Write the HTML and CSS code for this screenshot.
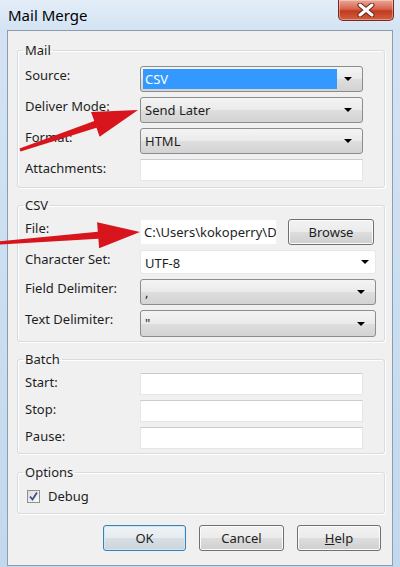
FILE: index.html
```html
<!DOCTYPE html>
<html>

<head>
    <meta name="viewport" content="width=device-width, initial-scale=1.0">
    <link rel="stylesheet" href="styles.css">
</head>

<body>
    <div class="window">
        <div class="titlebar">
            <span class="title">Mail Merge</span>
            <button class="close" aria-label="Close">
                <svg width="18" height="14" viewBox="0 0 18 14">
                    <path d="M3 2 L15 12 M15 2 L3 12" stroke="#6b2418" stroke-width="5" stroke-linecap="round" />
                    <path d="M3 2 L15 12 M15 2 L3 12" stroke="#fff" stroke-width="3" stroke-linecap="round" />
                </svg>
            </button>
        </div>

        <div class="client">
            <fieldset class="group">
                <legend>Mail</legend>
                <div class="rows rows-narrow">
                    <label>Source:</label>
                    <div class="combo">
                        <span class="val selected">CSV</span>
                        <span class="arrow"></span>
                    </div>
                    <label>Deliver Mode:</label>
                    <div class="combo">
                        <span class="val">Send Later</span>
                        <span class="arrow"></span>
                    </div>
                    <label>Format:</label>
                    <div class="combo">
                        <span class="val">HTML</span>
                        <span class="arrow"></span>
                    </div>
                    <label>Attachments:</label>
                    <div class="text"></div>
                </div>
            </fieldset>

            <fieldset class="group">
                <legend>CSV</legend>
                <div class="rows rows-wide">
                    <label>File:</label>
                    <div class="file-row">
                        <div class="text file">C:\Users\kokoperry\D</div>
                        <button class="btn browse">Browse</button>
                    </div>
                    <label>Character Set:</label>
                    <div class="combo plain">
                        <span class="val">UTF-8</span>
                        <span class="arrow"></span>
                    </div>
                    <label>Field Delimiter:</label>
                    <div class="combo">
                        <span class="val">,</span>
                        <span class="arrow"></span>
                    </div>
                    <label>Text Delimiter:</label>
                    <div class="combo tall">
                        <span class="val">"</span>
                        <span class="arrow"></span>
                    </div>
                </div>
            </fieldset>

            <fieldset class="group">
                <legend>Batch</legend>
                <div class="rows rows-narrow">
                    <label>Start:</label>
                    <div class="text"></div>
                    <label>Stop:</label>
                    <div class="text"></div>
                    <label>Pause:</label>
                    <div class="text"></div>
                </div>
            </fieldset>

            <fieldset class="group options">
                <legend>Options</legend>
                <div class="check-row">
                    <span class="check">
                        <svg width="11" height="11" viewBox="0 0 11 11">
                            <path d="M2 5.5 L4.5 8.5 L9 1.5" fill="none" stroke="#3b4f8a" stroke-width="1.8" />
                        </svg>
                    </span>
                    <span>Debug</span>
                </div>
            </fieldset>

            <div class="actions">
                <button class="btn default ok">OK</button>
                <button class="btn cancel">Cancel</button>
                <button class="btn help"><u>H</u>elp</button>
            </div>
        </div>

        <!-- red annotation arrows drawn over the dialog -->
        <svg class="arrows" width="400" height="567" viewBox="0 0 400 567">
            <polygon fill="#d8141d"
                points="19.5,148.6 94.3,121.1 91,112 138,110 99.6,136.7 96.5,127.7 20.5,151.4" />
            <polygon fill="#d8141d"
                points="-2,241.5 97.8,231.8 97.1,222.3 140,232 99.1,248.3 98.4,238.8 -2,244.5" />
        </svg>
    </div>
</body>

</html>
```

FILE: styles.css
```css
* {
    box-sizing: border-box;
}

body {
    margin: 0;
    font-family: "Noto Sans", "Open Sans", sans-serif;
    font-size: 13px;
    color: #1e1e1e;
}

.window {
    position: relative;
    width: 400px;
    height: 567px;
    overflow: hidden;
    background: linear-gradient(#e3edf8 0px, #d3e3f3 30px, #c3d8ee 100%);
}

.titlebar {
    height: 30px;
    display: flex;
    justify-content: space-between;
    align-items: flex-start;
    padding-left: 8px;
}

.title {
    font-size: 15px;
    line-height: 30px;
    color: #000;
}

.close {
    width: 56px;
    height: 21px;
    margin-right: 6px;
    padding: 0;
    border: 1px solid #7a2a1c;
    border-top: none;
    border-radius: 0 0 5px 5px;
    background: linear-gradient(#eaa898, #d7634c 45%, #c23a20 55%, #d0603f);
    box-shadow: inset 0 0 0 1px rgba(255, 255, 255, 0.35);
    display: flex;
    align-items: center;
    justify-content: center;
}

.client {
    margin: 0 7px;
    height: 536px;
    background: #f0f0f0;
    border: 1px solid #8f9cab;
    padding: 10px 7px 0 9px;
}

.group {
    margin: 0 0 8px;
    border: 1px solid #d5dce2;
    border-radius: 3px;
    padding: 5px 8px 4px 7px;
    box-shadow: inset 1px 1px 0 #fff, 1px 1px 0 #fff;
}

.group legend {
    padding: 0 2px;
    margin-left: -2px;
    line-height: 18px;
}

.group:first-child {
    padding-top: 7px;
    padding-bottom: 6px;
}

.options {
    margin-top: 9px;
    padding-top: 5px;
    padding-bottom: 7px;
}

.rows {
    display: grid;
    row-gap: 5px;
}

.rows-narrow {
    grid-template-columns: 115px 223px;
}

.rows-wide {
    grid-template-columns: 115px 1fr;
}

.rows label {
    align-self: start;
    line-height: 18px;
}

.combo {
    height: 26px;
    display: flex;
    align-items: center;
    padding: 2px;
    border: 1px solid #8c8c8c;
    border-radius: 3px;
    background: linear-gradient(#f4f4f4, #eaeaea 50%, #dedede 51%, #d3d3d3);
}

.combo.tall {
    height: 27px;
}

.combo.plain {
    height: 24px;
    border-color: #e4e7eb;
    background: #fff;
}

.combo .val {
    flex: 1;
    height: 100%;
    padding-left: 2px;
    line-height: 20px;
    white-space: nowrap;
}

.combo .selected {
    background: #3399ff;
    color: #fff;
}

.arrow {
    width: 0;
    height: 0;
    margin: 0 8px 0 7px;
    border-left: 4px solid transparent;
    border-right: 4px solid transparent;
    border-top: 4px solid #000;
}

.combo.plain .arrow {
    margin-right: 4px;
}

.text {
    height: 22px;
    background: #fff;
    border: 1px solid #e3e6ea;
    border-top-color: #c9ccd2;
}

.file-row {
    display: flex;
    gap: 11px;
}

.text.file {
    width: 137px;
    height: 26px;
    padding: 0 3px;
    line-height: 24px;
    overflow: hidden;
    white-space: nowrap;
    border-color: #eef0f2;
}

.btn {
    height: 26px;
    padding: 0;
    border: 1px solid #707070;
    border-radius: 3px;
    background: linear-gradient(#f2f2f2, #ebebeb 50%, #dddddd 51%, #cfcfcf);
    box-shadow: inset 0 0 0 1px #fbfbfb;
    font: inherit;
    color: #1e1e1e;
}

.browse {
    width: 86px;
}

.check-row {
    height: 20px;
    display: flex;
    align-items: center;
    gap: 8px;
    padding-left: 2px;
}

.check {
    width: 13px;
    height: 13px;
    display: flex;
    align-items: center;
    justify-content: center;
    border: 1px solid #8e8f8f;
    background: linear-gradient(135deg, #dcdcdc, #fbfbfb);
}

.actions {
    margin-top: 11px;
    padding-right: 4px;
    display: flex;
    justify-content: flex-end;
    gap: 13px;
}

.ok {
    width: 83px;
}

.cancel {
    width: 85px;
}

.help {
    width: 84px;
}

.btn.default {
    border-color: #3c7fb1;
    box-shadow: inset 0 0 0 1px #cde8f8;
    background: linear-gradient(#eef3f6, #e6ebef 50%, #d8dfe4 51%, #ccd5db);
}

.arrows {
    position: absolute;
    left: 0;
    top: 0;
    pointer-events: none;
}
```
